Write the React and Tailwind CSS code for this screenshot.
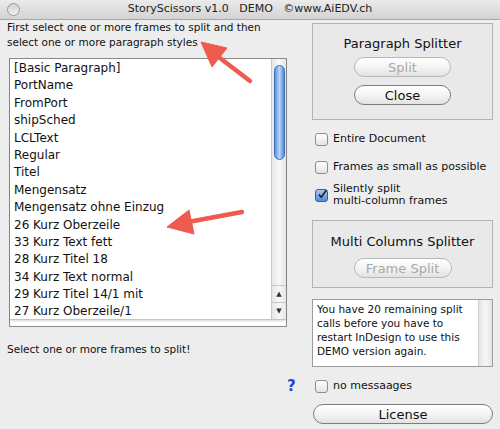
import React from "react";

const STYLES = [
  "[Basic Paragraph]",
  "PortName",
  "FromPort",
  "shipSched",
  "LCLText",
  "Regular",
  "Titel",
  "Mengensatz",
  "Mengensatz ohne Einzug",
  "26 Kurz Oberzeile",
  "33 Kurz Text fett",
  "28 Kurz Titel 18",
  "34 Kurz Text normal",
  "29 Kurz Titel 14/1 mit",
  "27 Kurz Oberzeile/1",
];

function AquaButton({ children, disabled, className = "" }) {
  return (
    <div
      className={`flex h-[20px] items-center justify-center rounded-full border bg-gradient-to-b from-white via-[#f4f4f4] to-[#e2e2e2] text-[13px] leading-none ${
        disabled ? "border-[#b8b8b8] text-[#a8a8a8]" : "border-[#7d7d7d] text-[#111]"
      } ${className}`}
    >
      {children}
    </div>
  );
}

function Checkbox({ checked }) {
  return (
    <div
      className={`flex h-[13px] w-[13px] shrink-0 items-center justify-center rounded-[3px] border ${
        checked
          ? "border-[#3a5d95] bg-gradient-to-b from-[#a9c8f0] to-[#4f8be0]"
          : "border-[#8e8e8e] bg-gradient-to-b from-white to-[#e4e4e4]"
      }`}
    >
      {checked && (
        <svg width="13" height="13" viewBox="0 0 13 13" className="-mt-[3px] ml-[1px]">
          <path d="M2.5 6.5 L5.5 10 L12 1" fill="none" stroke="#1b1b1b" strokeWidth="2" />
        </svg>
      )}
    </div>
  );
}

export default function App() {
  return (
    <div
      className="relative h-[429px] w-[500px] overflow-hidden bg-[#ededed] text-[#111]"
      style={{ fontFamily: '"DejaVu Sans", Verdana, sans-serif' }}
    >
      {/* title bar */}
      <div className="relative flex h-[20px] items-center justify-center border-b border-[#a6a6a6] bg-gradient-to-b from-[#ebebeb] to-[#d3d3d3]">
        <div className="absolute left-[7px] top-[3px] h-[13px] w-[13px] rounded-full border border-[#9a9a9a] bg-gradient-to-b from-[#d0d0d0] to-[#f2f2f2]" />
        <span className="whitespace-pre text-[11px] text-[#222]">StoryScissors v1.0   DEMO   ©www.AiEDV.ch</span>
      </div>

      <div className="flex">
        {/* left column */}
        <div className="w-[290px] pl-[7px]">
          <p className="text-[10.5px] leading-[15px]">
            First select one or more frames to split and then
            <br />
            select one or more paragraph styles
          </p>
          <div className="ml-[2px] mt-[8px] h-[269px] w-[278px] border border-[#8c8c8c] bg-white">
            <div className="flex h-[261px] border-b border-[#c4c4c4] shadow-[0_1px_2px_rgba(0,0,0,0.15)]">
              <ul className="flex-1 pl-[4px] pt-[1px] text-[12px]">
                {STYLES.map((s) => (
                  <li key={s} className="h-[17.4px] leading-[17.4px] whitespace-nowrap">
                    {s}
                  </li>
                ))}
              </ul>
              {/* scrollbar */}
              <div className="flex w-[15px] flex-col border-l border-[#c8c8c8] bg-gradient-to-r from-[#e6e6e6] via-[#f8f8f8] to-[#e6e6e6]">
                <div className="flex-1 px-[1.5px] pt-[6px]">
                  <div className="h-[95px] rounded-[6px] border border-[#3d6fb8] bg-gradient-to-r from-[#5b94dd] via-[#b9d6f7] to-[#4f89d6]" />
                </div>
                <div className="flex h-[17px] items-center justify-center border-t border-[#c8c8c8] text-[7px] text-[#333]">▲</div>
                <div className="flex h-[17px] items-center justify-center border-t border-[#c8c8c8] text-[7px] text-[#333]">▼</div>
              </div>
            </div>
          </div>
          <p className="mt-[15px] text-[10.5px] leading-[14px]">Select one or more frames to split!</p>
        </div>

        {/* right column */}
        <div className="w-[210px] pr-[7px]">
          <div className="ml-[22px] mt-[3px] flex h-[97px] flex-col items-center border border-[#b4b4b4] bg-[#e9e9e9]">
            <div className="mt-[11px] text-[13px] leading-[17px]">Paragraph Splitter</div>
            <AquaButton disabled className="mt-[5px] w-[97px]">Split</AquaButton>
            <AquaButton className="mt-[8px] w-[97px]">Close</AquaButton>
          </div>

          <div className="ml-[25px] mt-[13px] flex flex-col text-[11px]">
            <div className="flex h-[13px] items-center gap-[5px]">
              <Checkbox />
              <span>Entire Document</span>
            </div>
            <div className="mt-[15px] flex h-[13px] items-center gap-[5px]">
              <Checkbox />
              <span>Frames as small as possible</span>
            </div>
            <div className="mt-[9px] flex items-start gap-[5px]">
              <div className="mt-[6px]">
                <Checkbox checked />
              </div>
              <span className="leading-[12px]">
                Silently split
                <br />
                multi-column frames
              </span>
            </div>
          </div>

          <div className="ml-[22px] mt-[13px] flex h-[68px] flex-col items-center border border-[#b4b4b4] bg-[#e9e9e9]">
            <div className="mt-[12px] text-[13px] leading-[17px]">Multi Columns Splitter</div>
            <AquaButton disabled className="mt-[8px] w-[98px]">Frame Split</AquaButton>
          </div>

          <div className="ml-[22px] mt-[11px] flex h-[68px] border border-[#9c9c9c] bg-white">
            <p className="flex-1 pl-[4px] pt-[2px] text-[10.5px] leading-[14px]">
              You have 20 remaining split calls before you have to restart InDesign to use this DEMO version again.
            </p>
            <div className="w-[14px] border-l border-[#d0d0d0] bg-gradient-to-r from-[#e4e4e4] via-[#f6f6f6] to-[#e4e4e4]" />
          </div>

          <div className="mt-[13px] flex h-[13px] items-center">
            <span className="-ml-[3px] w-[28px] text-[15px] font-bold text-[#2442d6]">?</span>
            <Checkbox />
            <span className="ml-[5px] text-[11px]">no messaages</span>
          </div>

          <AquaButton className="ml-[23px] mt-[11px] w-[180px]">License</AquaButton>
        </div>
      </div>

      {/* annotation arrows */}
      <svg className="pointer-events-none absolute inset-0" width="500" height="429" viewBox="0 0 500 429">
        <g fill="#ef5a4e" stroke="#ef5a4e">
          <line x1="250" y1="81" x2="216" y2="55" strokeWidth="4.5" strokeLinecap="round" />
          <polygon points="201,42 227,48 212,67" strokeWidth="1" strokeLinejoin="round" />
          <line x1="242" y1="212" x2="188" y2="222" strokeWidth="4.5" strokeLinecap="round" />
          <polygon points="167,227 189,210 194,234" strokeWidth="1" strokeLinejoin="round" />
        </g>
      </svg>
    </div>
  );
}
